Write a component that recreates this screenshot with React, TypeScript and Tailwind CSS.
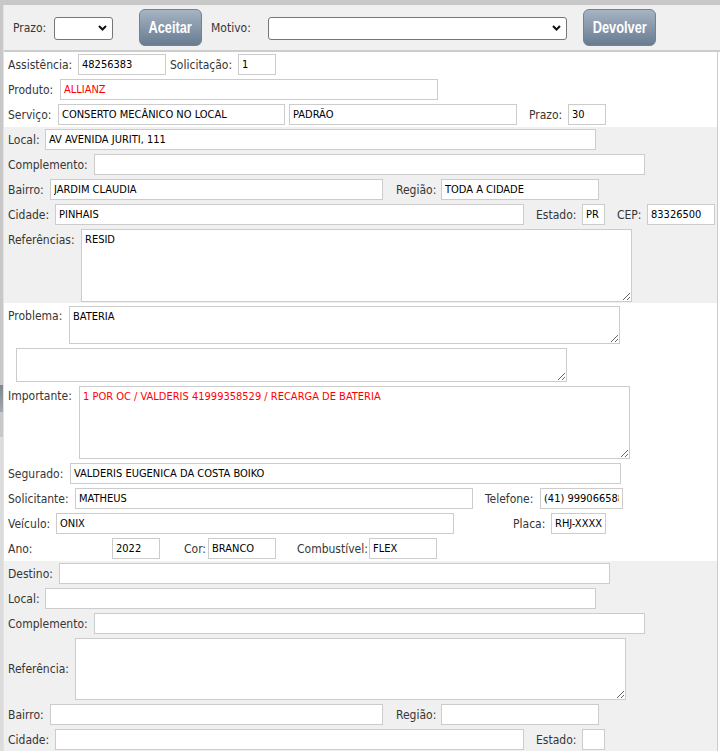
import React from 'react';

const LBL = 'shrink-0 whitespace-nowrap text-[12px] text-[#363636]';

function Label({ text, w, ml = 0, top = false }: { text: string; w: number; ml?: number; top?: boolean }) {
  return (
    <span className={LBL + (top ? ' self-start' : '')} style={{ width: w, marginLeft: ml }}>
      {text}
    </span>
  );
}

function Field({ value = '', w, red = false }: { value?: string; w: number; red?: boolean }) {
  return (
    <input
      readOnly
      defaultValue={value}
      style={{ width: w }}
      className={
        'h-[21px] shrink-0 border border-[#cccccc] bg-white px-[3px] text-[11px] outline-none ' +
        (red ? 'text-[#ff0000]' : 'text-black')
      }
    />
  );
}

function Area({ value = '', w = 551, h, red = false }: { value?: string; w?: number; h: number; red?: boolean }) {
  return (
    <textarea
      readOnly
      defaultValue={value}
      style={{ width: w, height: h }}
      className={
        'shrink-0 resize border border-[#cccccc] bg-white px-[3px] py-[3px] text-[11px] leading-[14px] outline-none ' +
        (red ? 'text-[#ff0000]' : 'text-black')
      }
    />
  );
}

function Select({ w }: { w: number }) {
  return (
    <div className="relative shrink-0" style={{ width: w }}>
      <select className="h-[23px] w-full appearance-none rounded-[3px] border border-[#767676] bg-white text-[12px] outline-none">
        <option></option>
      </select>
      <svg className="pointer-events-none absolute right-[6px] top-[10px]" width="9" height="6" viewBox="0 0 9 6">
        <path d="M1 1 L4.5 4.5 L8 1" fill="none" stroke="#111" strokeWidth="2" />
      </svg>
    </div>
  );
}

function Btn({ text, w, ml }: { text: string; w: number; ml: number }) {
  return (
    <button
      className="h-[37px] shrink-0 rounded-[6px] border border-[#6f8296] bg-gradient-to-b from-[#a6b4c3] to-[#687c91] text-[16px] font-bold text-white"
      style={{ width: w, marginLeft: ml, fontFamily: '"Liberation Sans", Arial, sans-serif' }}
    >
      <span className="inline-block scale-x-[0.8]">{text}</span>
    </button>
  );
}

const Row = ({ children, className = '' }: { children: React.ReactNode; className?: string }) => (
  <div className={'flex h-[25px] items-center ' + className}>{children}</div>
);

export default function App() {
  return (
    <div
      className="relative h-[751px] w-[720px] overflow-hidden bg-white"
      style={{ fontFamily: '"DejaVu Sans Condensed", "DejaVu Sans", "Liberation Sans", sans-serif' }}
    >
      <div className="h-[5px] bg-[#c8c8c8]" />
      <div className="flex">
        {/* left frame edge */}
        <div className="flex w-[4px] shrink-0 flex-col border-r border-[#e2e2e2]">
          <div className="h-[380px] bg-[#c8c8c8]" />
          <div className="h-[27px] bg-gradient-to-b from-[#7e8790] to-[#a3a8ad]" />
          <div className="h-[25px] bg-[#c8c8c8]" />
          <div className="h-[314px] bg-[#dcdcdc]" />
        </div>

        <div className="flex-1">
          {/* toolbar */}
          <div className="flex h-[47px] items-center border-b-2 border-[#cccccc] bg-[#f0f0f0] pl-[9px]">
            <Label text="Prazo:" w={41} />
            <Select w={59} />
            <Btn text="Aceitar" w={63} ml={26} />
            <Label text="Motivo:" w={57} ml={9} />
            <Select w={299} />
            <Btn text="Devolver" w={73} ml={16} />
          </div>

          <div className="mr-[2px] border-r border-[#cccccc]">
            <div className="pl-[4px]">
              <Row>
                <Label text="Assistência:" w={70} />
                <Field value="48256383" w={88} />
                <Label text="Solicitação:" w={68} ml={4} />
                <Field value="1" w={38} />
              </Row>
              <Row>
                <Label text="Produto:" w={52} />
                <Field value="ALLIANZ" w={378} red />
              </Row>
              <Row>
                <Label text="Serviço:" w={50} />
                <Field value="CONSERTO MECÂNICO NO LOCAL" w={227} />
                <span className="w-[4px]" />
                <Field value="PADRÃO" w={228} />
                <Label text="Prazo:" w={39} ml={12} />
                <Field value="30" w={38} />
              </Row>
            </div>

            <div className="bg-[#f0f0f0] pl-[4px]">
              <Row>
                <Label text="Local:" w={37} />
                <Field value="AV AVENIDA JURITI, 111" w={551} />
              </Row>
              <Row>
                <Label text="Complemento:" w={86} />
                <Field w={551} />
              </Row>
              <Row>
                <Label text="Bairro:" w={42} />
                <Field value="JARDIM CLAUDIA" w={333} />
                <Label text="Região:" w={45} ml={13} />
                <Field value="TODA A CIDADE" w={158} />
              </Row>
              <Row>
                <Label text="Cidade:" w={47} />
                <Field value="PINHAIS" w={469} />
                <Label text="Estado:" w={46} ml={12} />
                <Field value="PR" w={23} />
                <Label text="CEP:" w={30} ml={12} />
                <Field value="83326500" w={68} />
              </Row>
              <div className="flex pb-[1px] pt-[2px]">
                <span className={LBL + ' mt-[2px] w-[73px]'}>Referências:</span>
                <Area value="RESID" h={73} />
              </div>
            </div>

            <div className="pl-[4px]">
              <div className="flex pb-[2px] pt-[3px]">
                <span className={LBL + ' mt-[1px] w-[61px]'}>Problema:</span>
                <Area value="BATERIA" h={38} />
              </div>
              <div className="flex py-[2px] pl-[8px]">
                <Area h={34} />
              </div>
              <div className="flex py-[2px]">
                <span className={LBL + ' mt-[1px] w-[71px]'}>Importante:</span>
                <Area value="1 POR OC / VALDERIS 41999358529 / RECARGA DE BATERIA" h={73} red />
              </div>
              <Row>
                <Label text="Segurado:" w={62} />
                <Field value="VALDERIS EUGENICA DA COSTA BOIKO" w={551} />
              </Row>
              <Row>
                <Label text="Solicitante:" w={67} />
                <Field value="MATHEUS" w={398} />
                <Label text="Telefone:" w={55} ml={12} />
                <Field value="(41) 999066588" w={83} />
              </Row>
              <Row>
                <Label text="Veículo:" w={48} />
                <Field value="ONIX" w={398} />
                <Label text="Placa:" w={38} ml={59} />
                <Field value="RHJ-XXXX" w={55} />
              </Row>
              <Row>
                <Label text="Ano:" w={104} />
                <Field value="2022" w={48} />
                <Label text="Cor:" w={24} ml={24} />
                <Field value="BRANCO" w={68} />
                <Label text="Combustível:" w={72} ml={21} />
                <Field value="FLEX" w={68} />
              </Row>
            </div>

            <div className="bg-[#f0f0f0] pl-[4px]">
              <Row>
                <Label text="Destino:" w={51} />
                <Field w={551} />
              </Row>
              <Row>
                <Label text="Local:" w={37} />
                <Field w={551} />
              </Row>
              <Row>
                <Label text="Complemento:" w={86} />
                <Field w={551} />
              </Row>
              <div className="flex items-center py-[2px]">
                <Label text="Referência:" w={67} />
                <Area h={62} />
              </div>
              <Row>
                <Label text="Bairro:" w={42} />
                <Field w={333} />
                <Label text="Região:" w={45} ml={13} />
                <Field w={158} />
              </Row>
              <Row>
                <Label text="Cidade:" w={47} />
                <Field w={469} />
                <Label text="Estado:" w={46} ml={12} />
                <Field w={23} />
              </Row>
            </div>
          </div>
        </div>
      </div>
    </div>
  );
}
